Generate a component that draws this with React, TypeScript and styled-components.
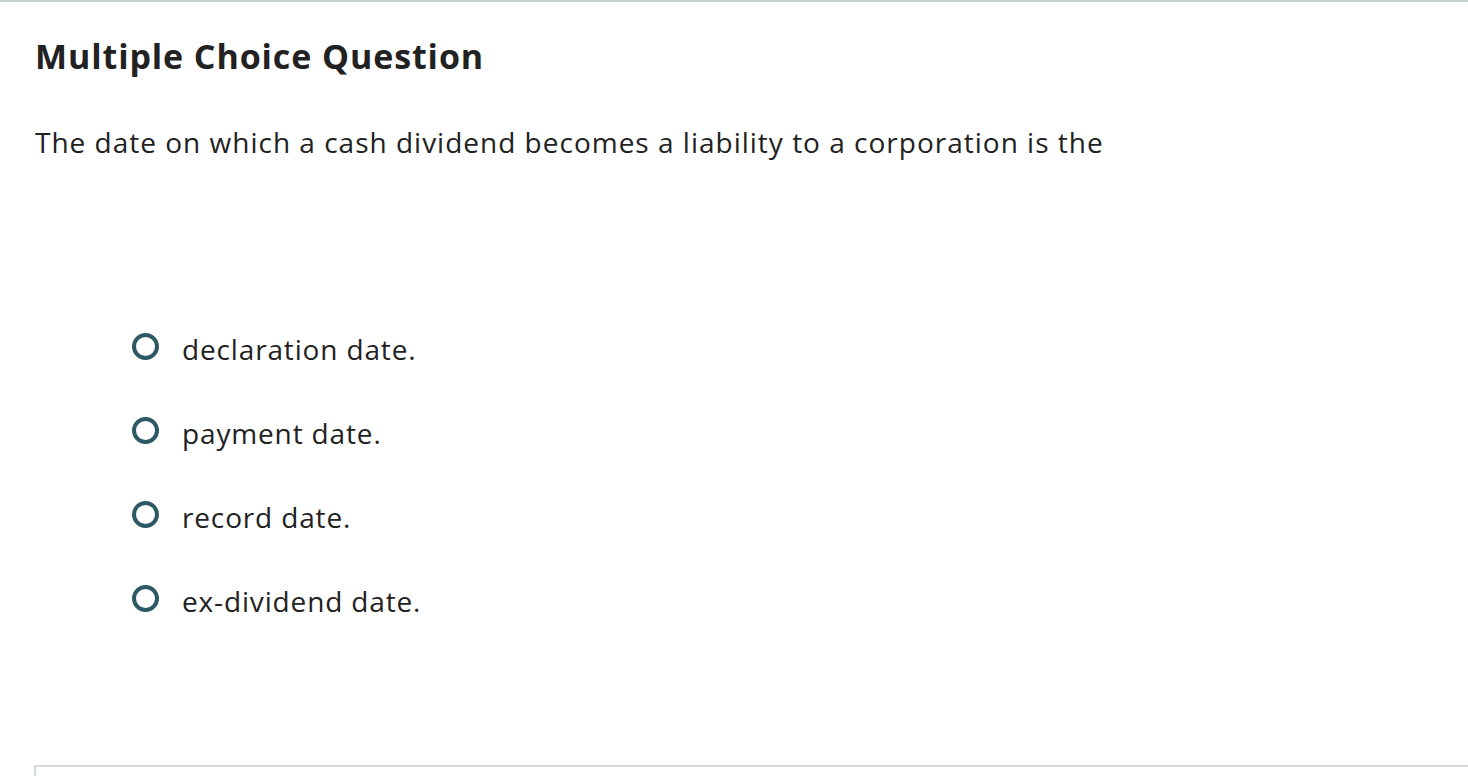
import React from "react";
import styled, { createGlobalStyle } from "styled-components";

const Global = createGlobalStyle`
  html, body { margin: 0; padding: 0; background: #ffffff; }
  body { font-family: "Open Sans", "Liberation Sans", Arial, sans-serif; color: #222222; }
`;

const Page = styled.div`
  border-top: 2px solid #c9d3d6;
  min-height: 774px;
  display: flex;
  flex-direction: column;
  overflow: hidden;
`;

const Content = styled.div`
  padding: 0 0 0 35px;
  display: flex;
  flex-direction: column;
`;

const Heading = styled.h1`
  margin: 33px 0 0;
  font-size: 34px;
  line-height: 42px;
  font-weight: 700;
  letter-spacing: 0.9px;
  color: #222222;
`;

const Prompt = styled.p`
  margin: 48px 0 0;
  font-size: 28px;
  line-height: 34px;
  letter-spacing: 1px;
  color: #222222;
`;

const Choices = styled.div`
  margin: 173px 0 0 97px;
  display: flex;
  flex-direction: column;
  gap: 50px;
`;

const Choice = styled.label`
  display: flex;
  align-items: center;
  gap: 23px;
  font-size: 28px;
  line-height: 34px;
  letter-spacing: 0.85px;
  color: #222222;
  cursor: pointer;
`;

const Radio = styled.span`
  width: 27px;
  height: 27px;
  box-sizing: border-box;
  border: 4px solid #2d5866;
  border-radius: 50%;
  flex: none;
  margin-top: -6px;
`;

const Footer = styled.div`
  margin: 147px 0 0 34px;
  height: 30px;
  border-top: 2px solid #d3d9dc;
  border-left: 2px solid #d3d9dc;
`;

const options = ["declaration date.", "payment date.", "record date.", "ex-dividend date."];

export default function App() {
  return (
    <>
      <Global />
      <Page>
        <Content>
          <Heading>Multiple Choice Question</Heading>
          <Prompt>The date on which a cash dividend becomes a liability to a corporation is the</Prompt>
          <Choices>
            {options.map((o) => (
              <Choice key={o}>
                <Radio />
                {o}
              </Choice>
            ))}
          </Choices>
        </Content>
        <Footer />
      </Page>
    </>
  );
}
